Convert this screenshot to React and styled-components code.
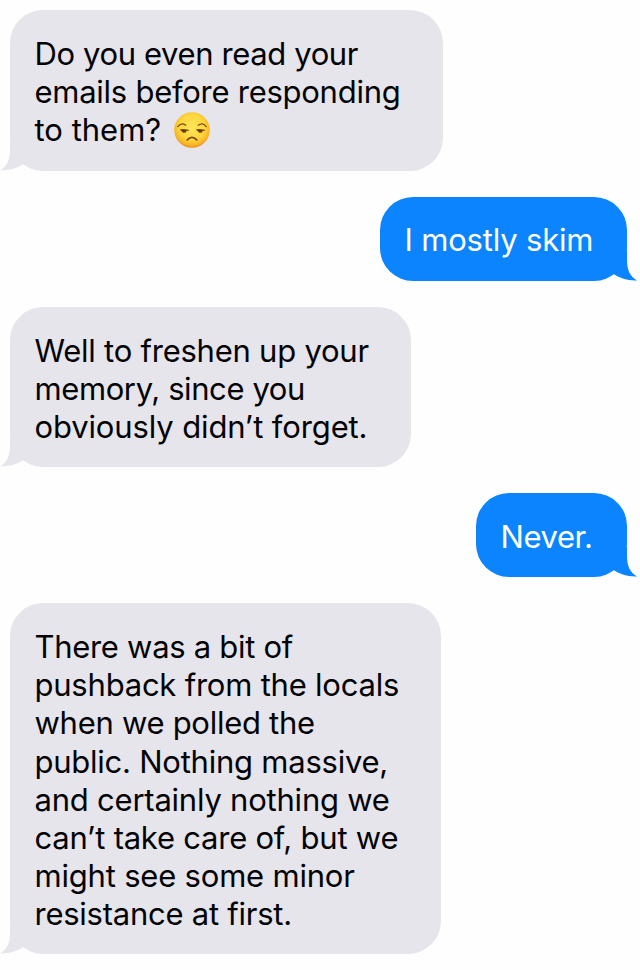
import React from 'react';
import styled, { createGlobalStyle } from 'styled-components';

const GlobalStyle = createGlobalStyle`
  body {
    margin: 0;
    background: #fefefe;
  }
`;

const Thread = styled.main`
  display: flex;
  flex-direction: column;
  gap: 25.9px;
  box-sizing: border-box;
  width: 640px;
  height: 970px;
  padding: 10.2px 13px 0 10px;
  overflow: hidden;
  font-family: Inter, 'Liberation Sans', sans-serif;
  font-size: 31px;
  line-height: 38.1px;
`;

const Bubble = styled.div`
  position: relative;
  align-self: ${({ $sent }) => ($sent ? 'flex-end' : 'flex-start')};
  box-sizing: border-box;
  width: ${({ $width }) => $width}px;
  padding: ${({ $sent }) => ($sent ? '24.6px 0 21.6px 24.5px' : '25px 0 21.2px 24.5px')};
  border-radius: 33px;
  background: ${({ $sent }) => ($sent ? '#0b84fe' : '#e6e5eb')};
  color: ${({ $sent }) => ($sent ? '#fff' : '#030306')};
`;

const Line = styled.div`
  height: 38.1px;
  white-space: nowrap;
  letter-spacing: ${({ $tracking }) => $tracking || 0}px;
`;

const TailShape = styled.svg`
  position: absolute;
  bottom: 0;
  width: 26px;
  height: 30px;
  ${({ $sent }) => ($sent ? 'right: -10px; transform: scaleX(-1);' : 'left: -10px;')}
  fill: ${({ $sent }) => ($sent ? '#0b84fe' : '#e6e5eb')};
`;

const EmojiIcon = styled.svg`
  width: 36px;
  height: 36px;
  margin-top: -8px;
  margin-left: 4.5px;
  vertical-align: -7px;
`;

const Tail = ({ sent }) => (
  <TailShape $sent={sent} viewBox="0 0 26 30">
    <path d="M10 0V9C10 19 7 25.500 0 29.4C8.500 29.800 17 27.500 23.300 23L26 10L20 0Z" />
  </TailShape>
);

const Unamused = () => (
  <EmojiIcon viewBox="0 0 38 38" role="img" aria-label="unamused">
    <defs>
      <radialGradient id="face" cx="50%" cy="42%" r="58%">
        <stop offset="0" stopColor="#ffe75a" />
        <stop offset="0.6" stopColor="#ffd63c" />
        <stop offset="0.86" stopColor="#fab624" />
        <stop offset="1" stopColor="#e88d20" />
      </radialGradient>
    </defs>
    <circle cx="19" cy="19" r="18.800" fill="url(#face)" />
    <g fill="none" stroke="#75451a" strokeLinecap="round">
      <path d="M4 15.500Q7.500 10.500 12.500 14M25.500 14Q30.500 10.500 34 15.500" strokeWidth="1.200" />
      <path d="M7 18.800Q10.500 18 15 19.300M24 18.800Q27.500 18 32 19.300" strokeWidth="1.300" />
      <path d="M14 29.500Q19 24 24 29.500" strokeWidth="1.800" />
    </g>
    <path d="M7.500 19H13.500Q13 22.300 10.200 22Q8 21.600 7.500 19M24.500 19H30.500Q30 22.300 27.200 22Q25 21.600 24.500 19" fill="#6a3e18" />
  </EmojiIcon>
);

const messages = [
  {
    width: 433,
    lines: [
      ['Do you even read your', -0.38],
      ['emails before responding', -0.26],
      ['to them? ', 0, true],
    ],
  },
  { sent: true, width: 247, lines: [['I mostly skim', -0.18]] },
  {
    width: 401,
    lines: [
      ['Well to freshen up your', -0.24],
      ['memory, since you', -0.4],
      ['obviously didn’t forget.', -0.13],
    ],
  },
  { sent: true, width: 151, lines: [['Never.', -0.4]] },
  {
    width: 431,
    lines: [
      ['There was a bit of', -0.3],
      ['pushback from the locals', -0.22],
      ['when we polled the', -0.28],
      ['public. Nothing massive,', -0.24],
      ['and certainly nothing we', -0.22],
      ['can’t take care of, but we', -0.23],
      ['might see some minor', -0.2],
      ['resistance at first.', -0.25],
    ],
  },
];

const App = () => (
  <>
    <GlobalStyle />
    <Thread>
      {messages.map(({ sent, width, lines }) => (
        <Bubble key={lines[0][0]} $sent={sent} $width={width}>
          {lines.map(([text, tracking, emoji]) => (
            <Line key={text} $tracking={tracking}>
              {text}
              {emoji && <Unamused />}
            </Line>
          ))}
          <Tail sent={sent} />
        </Bubble>
      ))}
    </Thread>
  </>
);

export default App;
